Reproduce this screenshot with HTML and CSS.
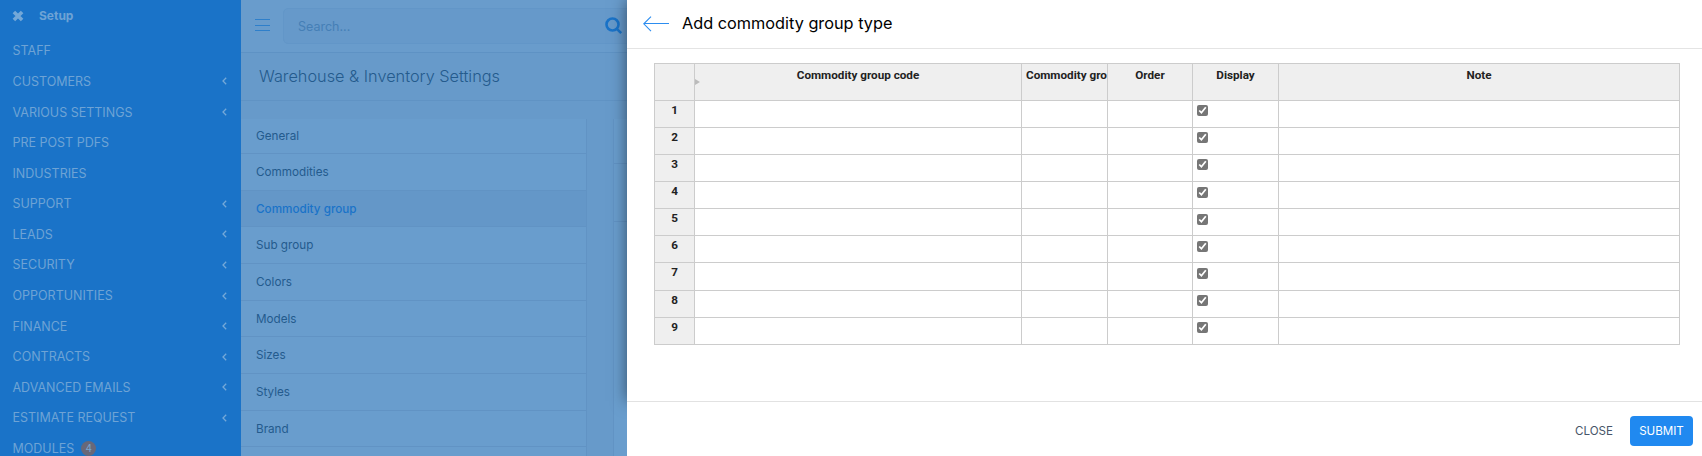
FILE: index.html
```html
<!DOCTYPE html>
<html lang="en">
<head>
    <meta charset="UTF-8">
    <meta name="viewport" content="width=device-width, initial-scale=1.0">
    <title>Warehouse &amp; Inventory Settings</title>
    <link rel="stylesheet" href="styles.css">
</head>
<body>
    <div class="page">
        <aside class="sidebar">
            <div class="sidebar-title">
                <svg class="close-icon" width="12" height="12" viewBox="0 0 12 12"><path d="M1.9 1.9l8.2 8.2M10.1 1.9l-8.2 8.2"/></svg>
                <span>Setup</span>
            </div>
            <ul class="setup-menu" id="setupMenu"></ul>
        </aside>

        <main class="content">
            <header class="topbar">
                <svg class="menu-icon" width="15" height="13" viewBox="0 0 15 13"><path d="M0 .5h15M0 6.5h15M0 11.5h15"/></svg>
                <div class="search">
                    <span>Search...</span>
                    <svg class="search-icon" width="18" height="18" viewBox="0 0 18 18"><circle cx="7.5" cy="7.5" r="6"/><path d="M11.8 11.8l4.4 4.4"/></svg>
                </div>
            </header>
            <h4 class="page-title">Warehouse &amp; Inventory Settings</h4>
            <div class="settings">
                <ul class="settings-menu">
                    <li>General</li>
                    <li>Commodities</li>
                    <li class="active">Commodity group</li>
                    <li>Sub group</li>
                    <li>Colors</li>
                    <li>Models</li>
                    <li>Sizes</li>
                    <li>Styles</li>
                    <li>Brand</li>
                    <li></li>
                </ul>
                <div class="settings-panel">
                    <div class="panel-head"></div>
                    <div class="panel-tools"></div>
                </div>
            </div>
        </main>

        <section class="drawer">
            <div class="drawer-main">
                <header class="drawer-header">
                    <svg class="back-icon" width="26" height="16" viewBox="0 0 26 16"><path d="M8 .7L.8 7.8L8 15.2M.8 7.5H26"/></svg>
                    <h4>Add commodity group type</h4>
                </header>
                <div class="drawer-body">
                    <div class="sheet" id="sheet">
                        <div class="cell head"></div>
                        <div class="cell head first">Commodity group code</div>
                        <div class="cell head narrow">Commodity gro</div>
                        <div class="cell head">Order</div>
                        <div class="cell head">Display</div>
                        <div class="cell head">Note</div>
                    </div>
                </div>
            </div>
            <footer class="drawer-footer">
                <button class="btn">CLOSE</button>
                <button class="btn btn-primary">SUBMIT</button>
            </footer>
        </section>
    </div>

    <script>
        const menu = [
            ['STAFF', false], ['CUSTOMERS', true], ['VARIOUS SETTINGS', true],
            ['PRE POST PDFS', false], ['INDUSTRIES', false], ['SUPPORT', true],
            ['LEADS', true], ['SECURITY', true], ['OPPORTUNITIES', true],
            ['FINANCE', true], ['CONTRACTS', true], ['ADVANCED EMAILS', true],
            ['ESTIMATE REQUEST', true], ['MODULES', false, 4]
        ];
        const arrow = '<svg class="arrow" width="5" height="8" viewBox="0 0 5 8"><path d="M4.2.8L1 4l3.2 3.2"/></svg>';

        // Setup menu
        document.getElementById('setupMenu').innerHTML = menu.map(([name, sub, count]) => `
            <li><span>${name}</span>${count ? `<span class="badge">${count}</span>` : ''}${sub ? arrow : ''}</li>
        `).join('');

        // Empty rows of the sheet
        const sheet = document.getElementById('sheet');
        for (let i = 1; i <= 9; i++) {
            sheet.insertAdjacentHTML('beforeend', `
                <div class="cell num">${i}</div>
                <div class="cell"></div>
                <div class="cell"></div>
                <div class="cell"></div>
                <div class="cell"><input type="checkbox" checked></div>
                <div class="cell"></div>
            `);
        }
    </script>
</body>
</html>
```

FILE: styles.css
```css
/* General Styles */
* {
    box-sizing: border-box;
}
body {
    margin: 0;
    font-family: Inter, sans-serif;
    font-size: 12.5px;
    background: #699ccc;
    overflow: hidden;
}
ul {
    list-style: none;
    margin: 0;
    padding: 0;
}
h4 {
    margin: 0;
    font-weight: 400;
}
svg {
    fill: none;
    flex-shrink: 0;
}
.page {
    display: flex;
    width: 100%;
    height: 456px;
    overflow: hidden;
}

/* Sidebar */
.sidebar {
    width: 241px;
    flex-shrink: 0;
    background: #1a73c8;
    color: #6ea3d5;
}
.sidebar-title {
    display: flex;
    align-items: center;
    gap: 15px;
    height: 35.6px;
    padding: 0 0 4px 12px;
    font-size: 12px;
    font-weight: 700;
}
.close-icon {
    stroke: #74a8d8;
    stroke-width: 3.6;
}
.setup-menu li {
    display: flex;
    align-items: center;
    height: 30.58px;
    padding: 0 14px 0 12.5px;
}
.arrow {
    margin-left: auto;
    stroke: #74a8d8;
    stroke-width: 1.3;
}
.badge {
    width: 15px;
    height: 15px;
    margin-left: 7px;
    border-radius: 50%;
    background: #686879;
    color: #7aa6d0;
    font-size: 10px;
    line-height: 14px;
    text-align: center;
}

/* Content */
.content {
    width: 386px;
    flex-shrink: 0;
    color: #245b8d;
    overflow: hidden;
}
.topbar {
    display: flex;
    align-items: center;
    height: 53px;
    padding-left: 14px;
    border-bottom: 1px solid #5e92c4;
}
.menu-icon {
    margin-top: -2px;
    stroke: #2e7fca;
}
.search {
    display: flex;
    align-items: center;
    justify-content: space-between;
    width: 370px;
    height: 36px;
    margin-left: 13px;
    padding: 0 29px 0 14px;
    flex-shrink: 0;
    border: 1px solid #6296c8;
    border-radius: 5px;
    background: #6699ca;
    color: #457fb6;
}
.search-icon {
    stroke: #1a73c8;
    stroke-width: 2.6;
}
.page-title {
    height: 48px;
    padding: 12px 0 0 18px;
    border-bottom: 1px solid #6093c4;
    background: #679aca;
    font-size: 16.3px;
    line-height: 23px;
    font-weight: 300;
}
.settings {
    display: flex;
    gap: 26px;
    padding-top: 18px;
    background: #679aca;
}
.settings-menu {
    width: 346px;
}
.settings-menu li {
    height: 36.67px;
    padding-left: 15px;
    border-right: 1px solid #6193c4;
    border-bottom: 1px solid #6193c4;
    background: #699dcd;
    font-size: 11.7px;
    line-height: 37px;
}
.settings-menu li:first-child {
    height: 35px;
    line-height: 35px;
}
.settings-menu .active {
    background: #6497c8;
    color: #1a73c8;
    font-weight: 500;
}
.settings-panel {
    flex: 1;
    height: 340px;
    border-left: 1px solid #6193c4;
    background: #699dcd;
}
.panel-head {
    height: 45px;
    border-bottom: 1px solid #6193c4;
}
.panel-tools {
    height: 58px;
    border-bottom: 1px solid #6193c4;
}

/* Drawer */
.drawer {
    position: relative;
    flex: 1;
    min-width: 0;
    color: #000;
}
.drawer-main {
    height: 401px;
    background: #fff;
    box-shadow: 0 0 15px rgba(0, 0, 0, 0.5);
}
.drawer-header {
    display: flex;
    align-items: center;
    gap: 13px;
    height: 49px;
    padding: 0 0 1px 16px;
    border-bottom: 1px solid #e4e4e4;
}
.drawer-header h4 {
    padding-bottom: 1px;
    font-size: 16.3px;
}
.back-icon {
    stroke: #2c8df0;
    stroke-width: 1.1;
}
.drawer-body {
    padding: 14px 22px 0 27px;
}
.sheet {
    display: grid;
    grid-template-columns: 40px 327px 86px 85px 86px 401px;
    grid-template-rows: 37px repeat(9, 27.09px);
    width: 1026px;
    border-top: 1px solid #ccc;
    border-left: 1px solid #ccc;
    color: #222;
    font-family: Roboto, sans-serif;
    font-size: 11.7px;
    line-height: 19px;
}
.cell {
    padding: 0 4px;
    border-right: 1px solid #ccc;
    border-bottom: 1px solid #ccc;
    overflow: hidden;
    white-space: nowrap;
}
.head, .num {
    background: #efefef;
    font-weight: 700;
    text-align: center;
}
.head {
    padding-top: 2px;
}
.first {
    position: relative;
}
.first::before {
    content: "";
    position: absolute;
    left: 0;
    top: 15px;
    border: 3px solid transparent;
    border-left: 5px solid #bbb;
    border-right: 0;
}
.narrow {
    padding-right: 0;
    text-align: left;
}
.cell input {
    display: block;
    width: 11px;
    height: 11px;
    margin: 4.3px 0 0;
    accent-color: #767676;
}
.drawer-footer {
    position: relative;
    display: flex;
    justify-content: flex-end;
    gap: 8px;
    height: 55px;
    padding: 14px 9px 0 0;
    border-top: 1px solid #e2e2e2;
    background: #fff;
}
.btn {
    height: 30px;
    padding: 0 9px 1px;
    border: none;
    border-radius: 4px;
    background: none;
    color: #475569;
    font-family: inherit;
    font-size: 11.6px;
    cursor: pointer;
}
.btn-primary {
    width: 63px;
    background: #2089f0;
    color: #fff;
}
```
